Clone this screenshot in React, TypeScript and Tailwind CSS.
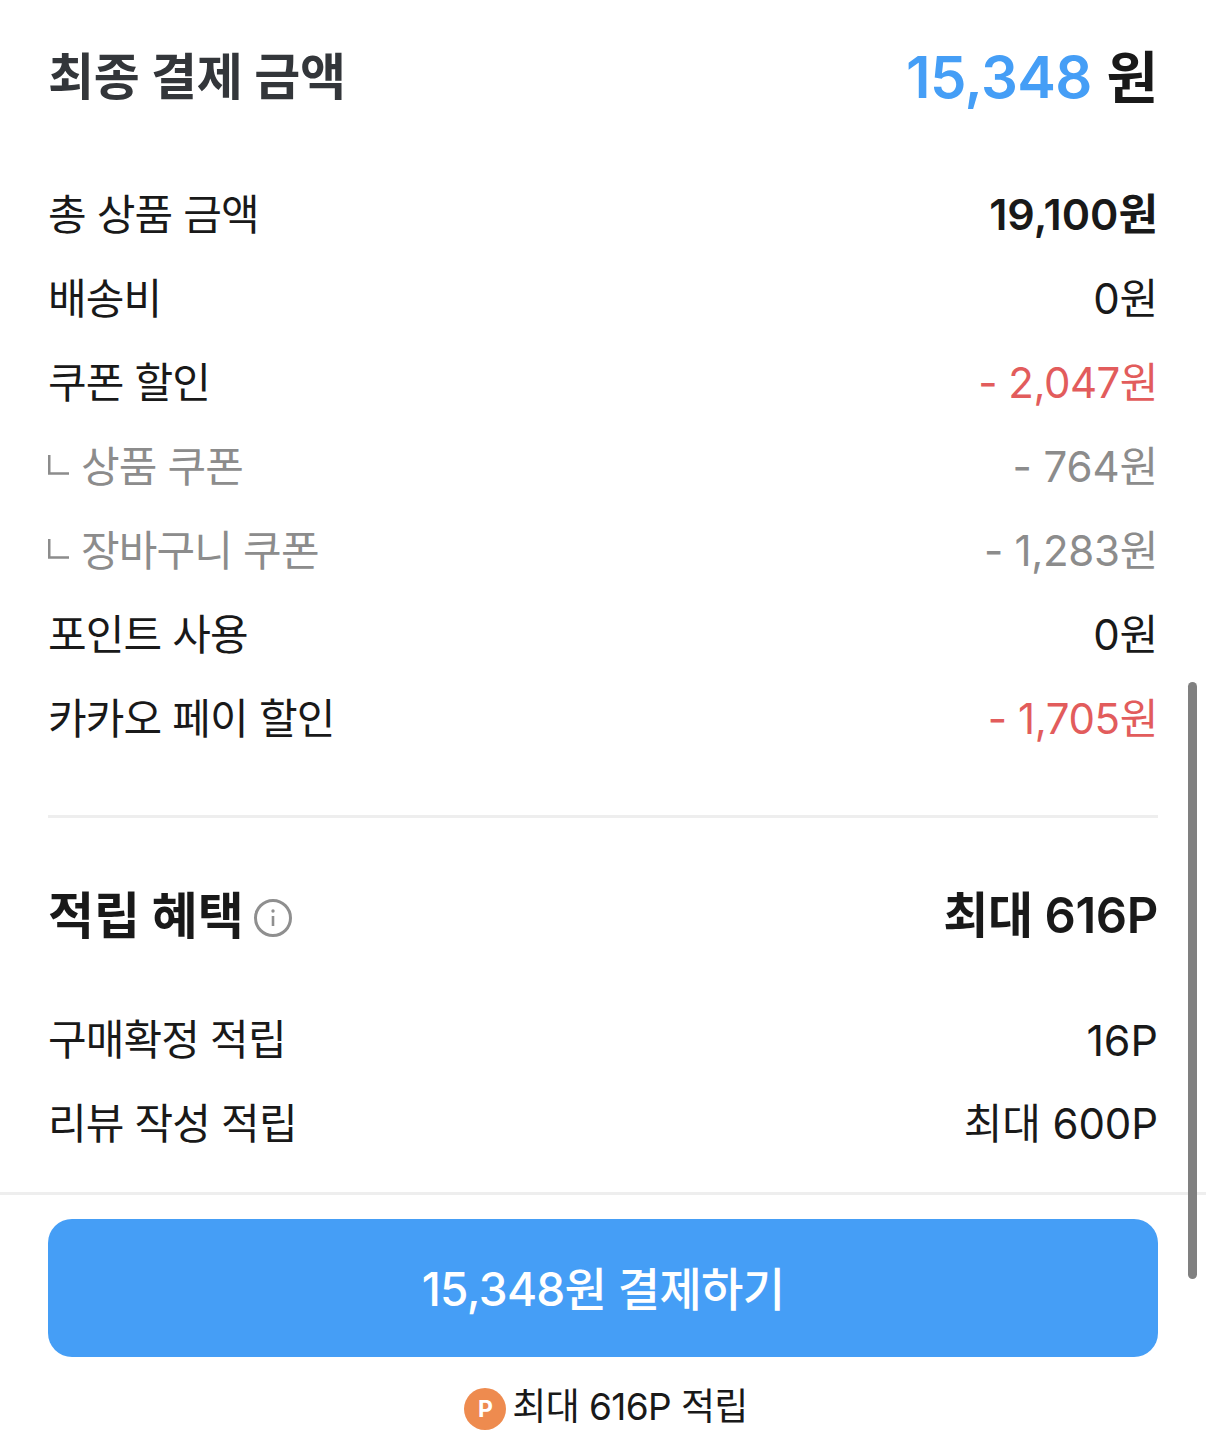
function Row({ label, value, labelCls = "text-[#191919]", valueCls = "text-[#191919] tracking-[-0.2px]", sub = false }: { label: string; value: string; labelCls?: string; valueCls?: string; sub?: boolean }) {
  return (
    <div className="flex h-[84px] items-center justify-between text-[42px] leading-[84px]">
      <div className={`flex items-center tracking-[-0.85px] ${labelCls}`}>
        {sub && (
          <svg className="mb-[4px] mr-[12px] h-[22px] w-[21px]" viewBox="0 0 21 22" fill="none">
            <path d="M1.25 1V19.5H21" stroke="#8c8c8c" strokeWidth="2.5" />
          </svg>
        )}
        <span>{label}</span>
      </div>
      <span className={valueCls}>{value}</span>
    </div>
  );
}

export default function App() {
  return (
    <div className="relative h-[1456px] w-[1206px] overflow-hidden bg-white font-['Inter','Noto_Sans_CJK_KR',sans-serif]">
      <div className="h-[1192px] px-12">
        <div className="flex h-[173px] items-start justify-between pt-[39px]">
          <span className="text-[50px] font-bold leading-[76px] tracking-[-0.25px] text-[#33363a]">최종 결제 금액</span>
          <span className="text-[58px] font-semibold leading-[76px] text-[#191919]">
            <span className="tracking-[-0.6px] text-[#459ef6]">15,348</span> <span className="text-[56px] font-bold">원</span>
          </span>
        </div>
        <Row label="총 상품 금액" value="19,100원" valueCls="-mt-[2px] text-[43px] font-semibold text-[#191919]" />
        <Row label="배송비" value="0원" />
        <Row label="쿠폰 할인" value="- 2,047원" valueCls="text-[#e25c5c] tracking-[-0.5px]" />
        <Row sub label="상품 쿠폰" value="- 764원" labelCls="text-[#8c8c8c]" valueCls="text-[#8c8c8c] tracking-[-0.1px]" />
        <Row sub label="장바구니 쿠폰" value="- 1,283원" labelCls="text-[#8c8c8c]" valueCls="text-[#8c8c8c] tracking-[-0.3px]" />
        <Row label="포인트 사용" value="0원" />
        <Row label="카카오 페이 할인" value="- 1,705원" valueCls="text-[#e25c5c] tracking-[-0.4px]" />
        <div className="mt-[54px] h-[3px] bg-[#eeeeee]" />
        <div className="flex h-[180px] items-start justify-between pt-[60px]">
          <div className="flex items-center">
            <span className="text-[50px] font-bold leading-[76px] text-[#191919]">적립 혜택</span>
            <svg className="ml-[9px] mt-[4px] h-[40px] w-[40px]" viewBox="0 0 40 40" fill="none">
              <circle cx="20" cy="20" r="17.5" stroke="#8f8f8f" strokeWidth="3" />
              <circle cx="20" cy="13" r="1.7" fill="#8f8f8f" />
              <path d="M20 18V28" stroke="#8f8f8f" strokeWidth="2.6" />
            </svg>
          </div>
          <span className="text-[49px] font-semibold leading-[76px] tracking-[-0.4px] text-[#191919]">최대 616P</span>
        </div>
        <Row label="구매확정 적립" value="16P" valueCls="text-[43px] text-[#191919]" />
        <Row label="리뷰 작성 적립" value="최대 600P" valueCls="text-[#191919] tracking-[-0.1px]" />
      </div>
      <div className="h-[264px] border-t-[3px] border-[#eeeeee] px-12 pt-[24px]">
        <button className="flex h-[138px] w-full items-center justify-center rounded-[24px] bg-[#459ef6] pt-[2px] text-[46px] font-[450] tracking-[-0.7px] text-white">
          15,348원 결제하기
        </button>
        <div className="ml-[6px] mt-[26px] flex items-center justify-center text-[37px] leading-[48px] tracking-[-0.6px] text-[#191919]">
          <span className="mr-[6px] mt-[3px] flex h-[42px] w-[42px] items-center justify-center rounded-full bg-[#ee8b4f] text-[23px] font-bold text-white">P</span>
          최대 616P 적립
        </div>
      </div>
      <div className="absolute left-[1188px] top-[682px] h-[597px] w-[9px] rounded-full bg-[#808080]" />
    </div>
  );
}
